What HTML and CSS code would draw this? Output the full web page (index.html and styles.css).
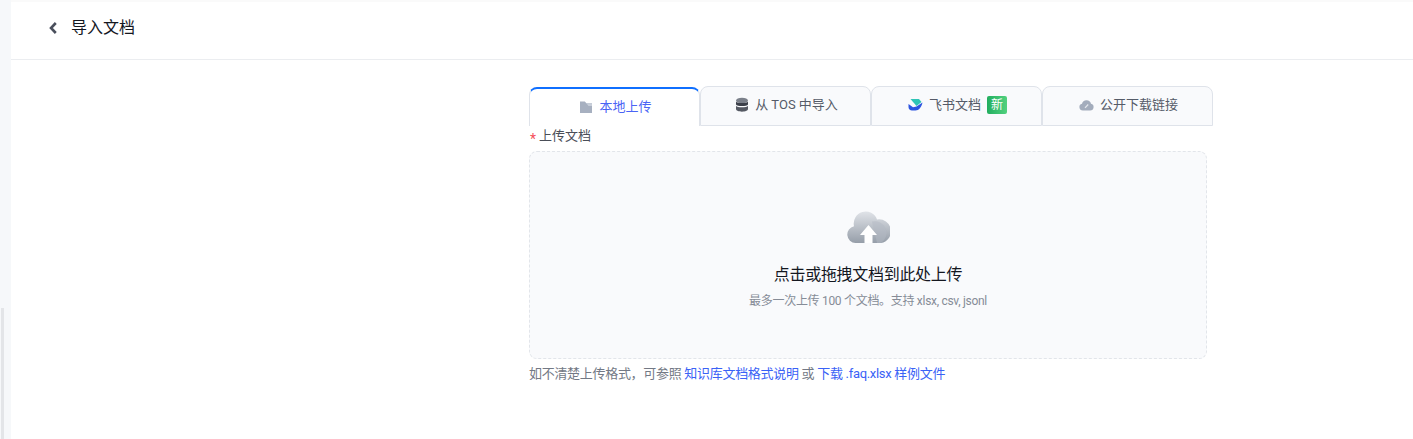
FILE: index.html
```html
<!DOCTYPE html>
<html lang="zh-CN">
<head>
<meta charset="utf-8">
<title>导入文档</title>
<link rel="stylesheet" href="styles.css">
</head>
<body>
<div class="app">
  <aside class="rail"><div class="thumb"></div></aside>
  <main class="page">
    <header class="head">
      <svg class="back" width="10" height="12" viewBox="0 0 10 12"><path d="M7.800 1 3 6l4.800 5" fill="none" stroke="#4a4f5c" stroke-width="2.600"/></svg>
      <h1 class="title">导入文档</h1>
    </header>
    <section class="content">
      <div class="tabs">
        <div class="tab active">
          <svg class="ico" width="14" height="14" viewBox="0 0 14 14"><path d="M1 1.500h4.800l1.600 1.800H13V13H1z" fill="#a7b0c0"/><path d="M7.400 3.300H13V6H9.500z" fill="#c9cfda"/></svg>
          <span>本地上传</span>
        </div>
        <div class="tab">
          <svg class="ico" width="14" height="16" viewBox="0 0 14 16"><ellipse cx="7" cy="3.500" rx="6" ry="2.800" fill="#7b808a"/><path d="M1 4.500c1 2 11 2 12 0v3c-1 2-11 2-12 0z" fill="#3b3f49"/><path d="M1 8.800c1 2 11 2 12 0v3.200c0 3.500-12 3.500-12 0z" fill="#555963"/></svg>
          <span>从 TOS 中导入</span>
        </div>
        <div class="tab">
          <svg class="ico" width="15" height="14" viewBox="0 0 15 14"><path d="M2.500 1h8.500L13.500 4 8.500 8z" fill="#2fc4b6"/><path d="M.5 6 5 9.300l3.500-.8L14.500 4.500C13.500 9 11 12.500 7.500 12.500H4C2 12.500.5 11 .5 9z" fill="#2d55e0"/></svg>
          <span>飞书文档</span>
          <span class="badge">新</span>
        </div>
        <div class="tab">
          <svg class="ico" width="15" height="14" viewBox="0 0 15 14"><path d="M3.800 12.500a3.400 3.400 0 0 1-.8-6.700A4.600 4.600 0 0 1 12 5.800a3.400 3.400 0 0 1-.8 6.700z" fill="#a3acbc"/><path d="M6 9.800 9.200 6.500" stroke="#e4e8ee" stroke-width="1.200" fill="none"/></svg>
          <span>公开下载链接</span>
        </div>
      </div>
      <div class="form">
        <div class="label"><span class="req">*</span>上传文档</div>
        <div class="drop">
          <svg class="cloud" width="43" height="33" viewBox="0 0 43 33">
            <defs><linearGradient id="cg" x1="0" y1="0" x2="0" y2="1"><stop offset="0" stop-color="#e0e3e8"/><stop offset="1" stop-color="#969ea9"/></linearGradient></defs>
            <path d="M8.500 33a8.500 8.500 0 0 1-1.500-16.800A12 12 0 0 1 30 9.500a11.800 11.800 0 0 1 4 23.500z" fill="url(#cg)"/>
            <path d="M25 11.500a11.800 11.800 0 0 1 9 21.500H30z" fill="#b4bac3" opacity=".5"/>
            <path d="M21.500 15 30 25h-4.500v8h-8v-8H13z" fill="#fff"/>
          </svg>
          <p class="drop-title">点击或拖拽文档到此处上传</p>
          <p class="drop-note">最多一次上传 100 个文档。支持 xlsx, csv, jsonl</p>
        </div>
        <p class="hint">如不清楚上传格式，可参照 <a class="link">知识库文档格式说明</a> 或 <a class="link">下载 .faq.xlsx 样例文件</a></p>
      </div>
    </section>
  </main>
</div>
</body>
</html>
```

FILE: styles.css
```css
* { box-sizing: border-box; }
html, body { margin: 0; height: 100%; overflow: hidden; background: #fff; }
body { font-family: Roboto, "Noto Sans CJK SC", sans-serif; color: #1d2129; }
.app { display: flex; height: 439px; }
.rail { width: 11px; flex: none; background: #f6f8fa; position: relative; }
.thumb { position: absolute; left: 1px; top: 308px; width: 3px; height: 131px; background: #e3e5e8; }
.page { flex: 1; min-width: 0; border-top: 2px solid #fafafa; }
.head { height: 58px; display: flex; align-items: center; padding: 0 0 6px 37px; border-bottom: 1px solid #ebedf0; }
.back { margin-right: 13px; }
.title { margin: 0; font-size: 16px; font-weight: 400; line-height: 24px; color: #14171f; }
.content { margin-left: 518px; width: 684px; padding-top: 26px; }
.tabs { display: flex; height: 40px; }
.tab { width: 171px; height: 40px; display: flex; align-items: center; justify-content: center; gap: 6px; padding: 0 0 5px 2px; font-size: 13px; color: #555b68; background: #f9fafc; border: 1px solid #dfe3ea; border-radius: 8px 8px 0 0; }
.tab.active { margin-top: 1px; height: 39px; padding-bottom: 4px; color: #4a64f5; background: #fff; border-top: 2px solid #0f6fff; border-bottom: 0; }
.ico { flex: none; margin-top: 3px; }
.badge { margin-top: 3px; width: 20px; height: 18px; border-radius: 2px; background: linear-gradient(90deg, #22ae5f, #52d17e); color: #fff; font-size: 12px; line-height: 18px; text-align: center; }
.form { width: 678px; }
.label { height: 25px; padding-bottom: 5px; font-size: 13px; line-height: 20px; color: #4a4e58; }
.req { display: inline-block; width: 10px; padding-left: 1px; color: #f5505a; font-size: 14px; line-height: 14px; vertical-align: -4px; }
.drop { height: 208px; border: 1px dashed #e2e5ea; border-radius: 8px; background: #f9fafc; display: flex; flex-direction: column; align-items: center; padding-top: 58px; }
.cloud { display: block; }
.drop-title { margin: 21px 0 0; font-size: 16px; line-height: 22px; letter-spacing: -0.3px; color: #14171f; }
.drop-note { margin: 6px 0 0; font-size: 12px; line-height: 18px; letter-spacing: -0.3px; color: #868c97; }
.hint { margin: 5px 0 0; font-size: 13px; line-height: 20px; letter-spacing: -0.3px; color: #737985; }
.link { color: #3a62f6; }
```
